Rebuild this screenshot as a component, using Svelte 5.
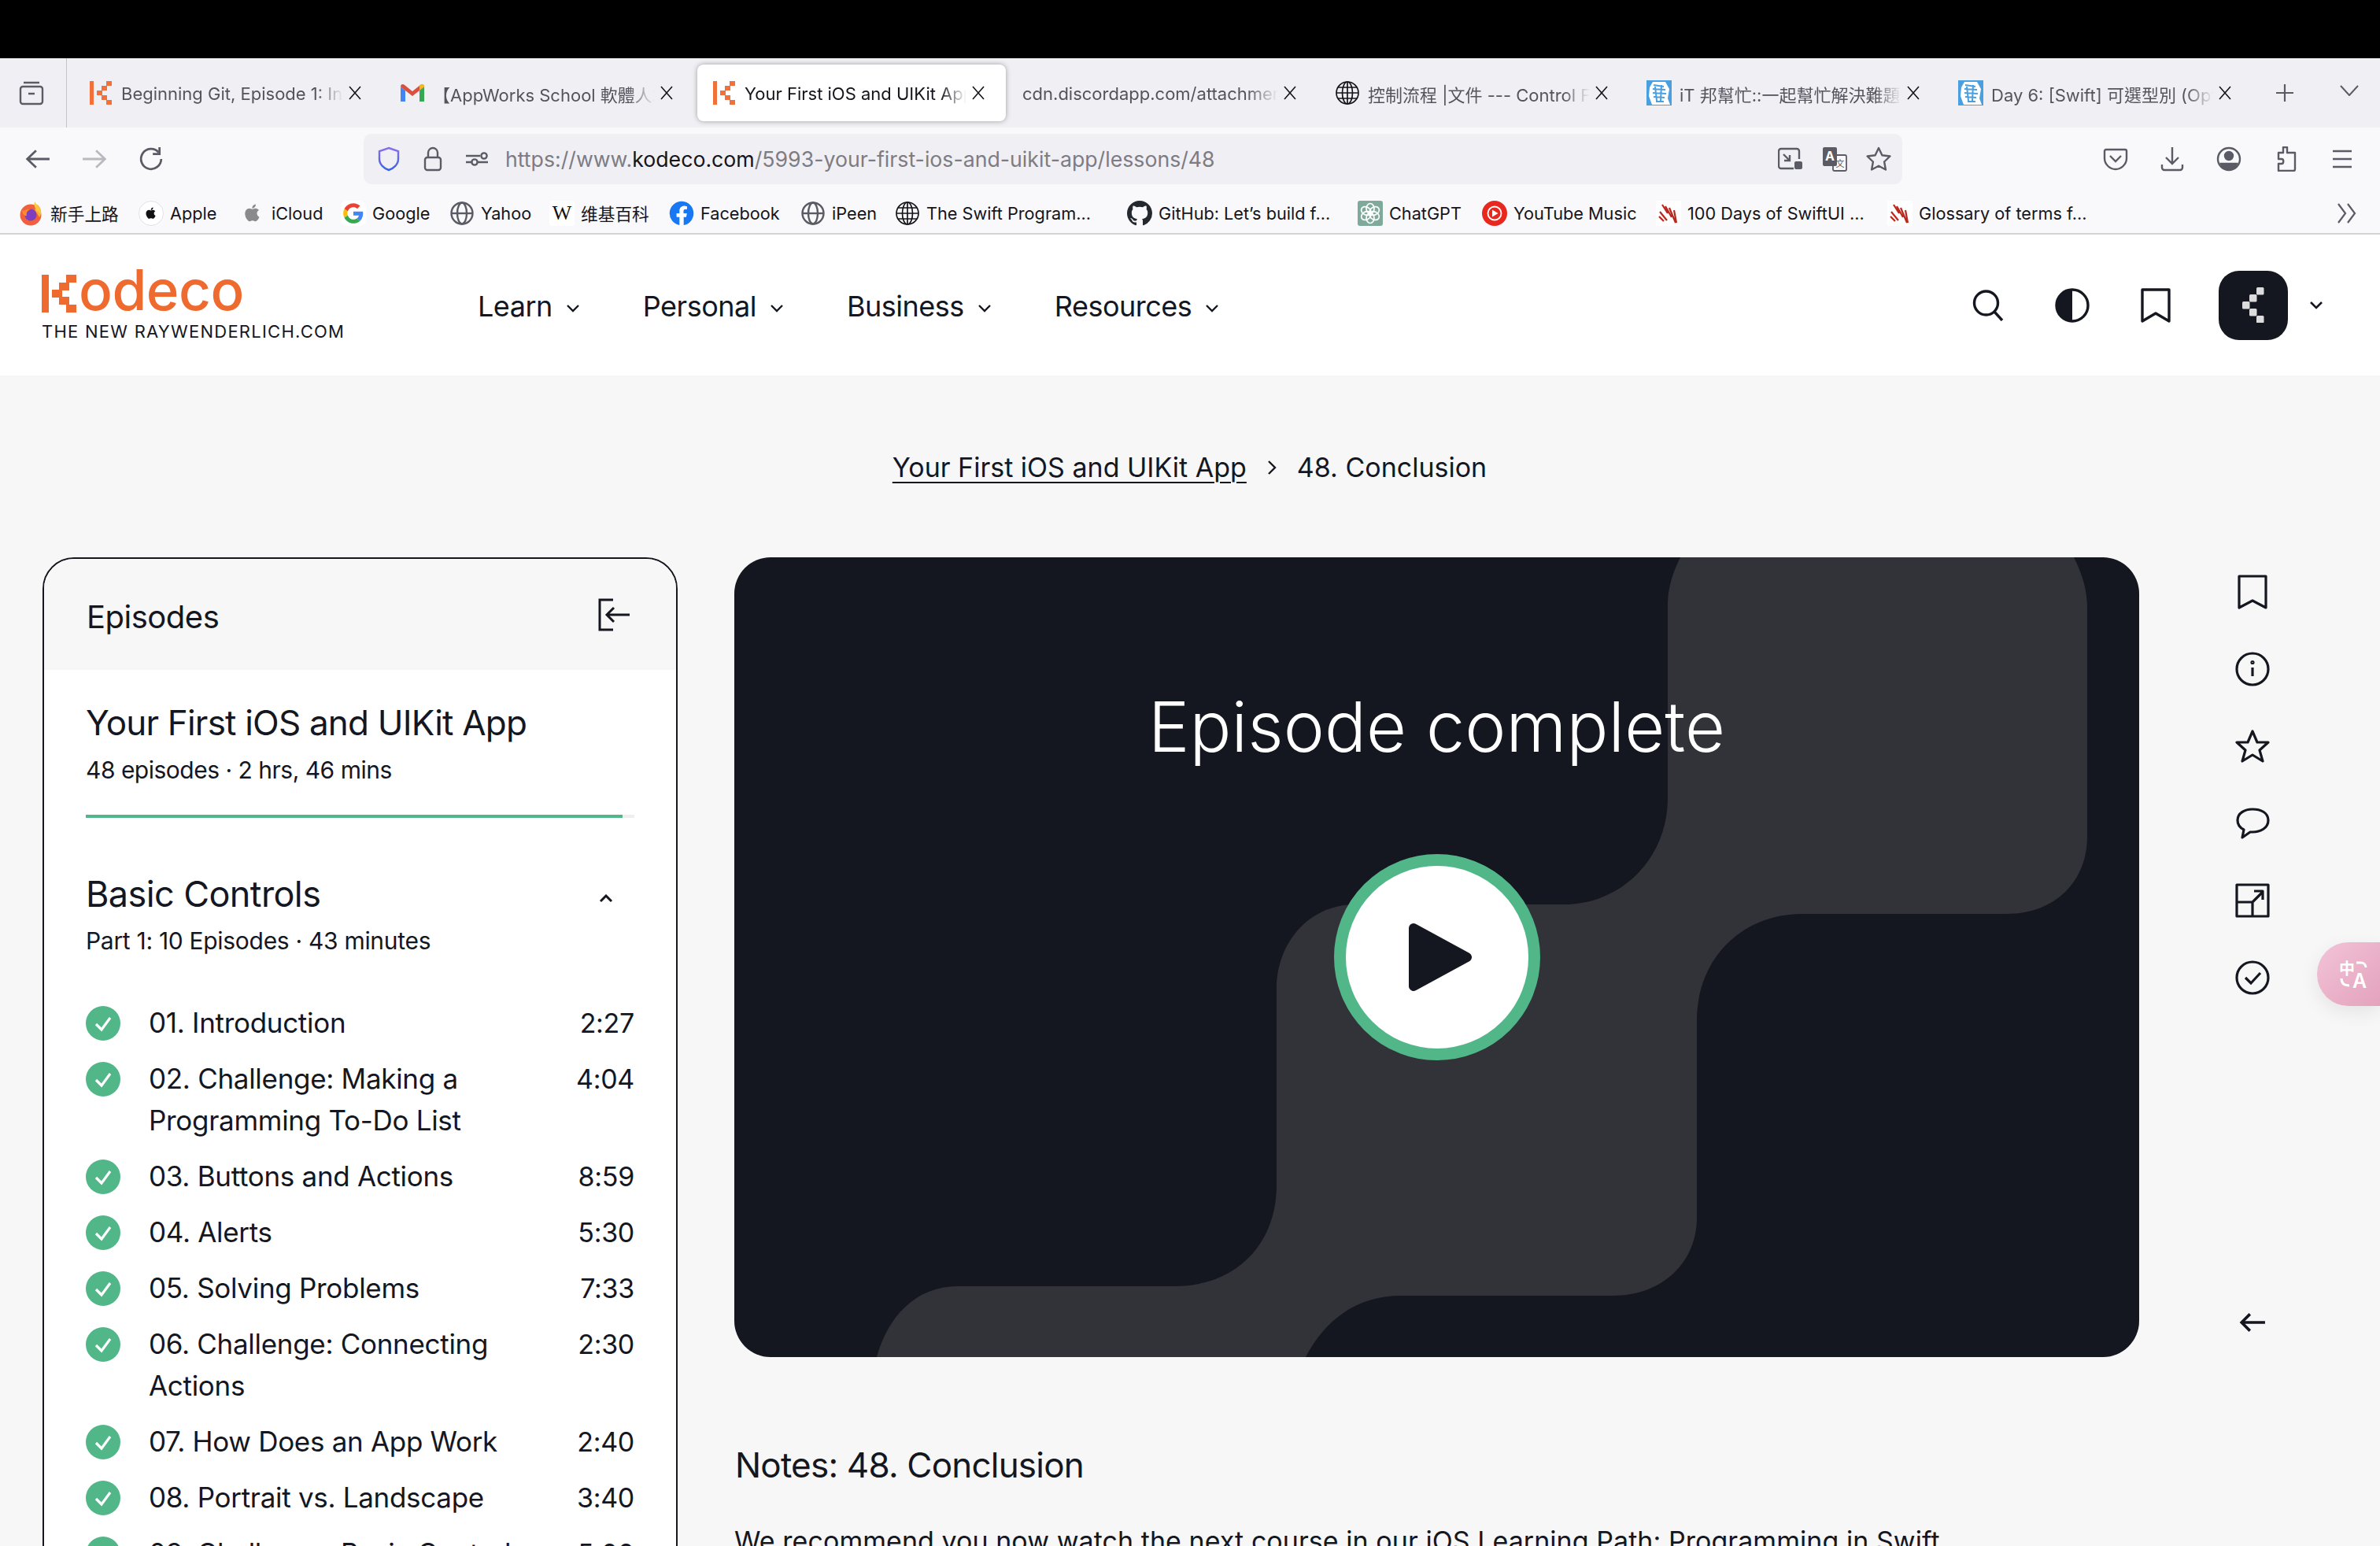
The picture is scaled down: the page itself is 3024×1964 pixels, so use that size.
<script>
	const tabs = [
		{ title: 'Beginning Git, Episode 1: Introduction', icon: 'k' },
		{ title: '【AppWorks School 軟體人才培訓', icon: 'gmail' },
		{ title: 'Your First iOS and UIKit App', icon: 'k', active: true },
		{ title: 'cdn.discordapp.com/attachments/10', icon: null },
		{ title: '控制流程 |文件 --- Control Flow', icon: 'globe2' },
		{ title: 'iT 邦幫忙::一起幫忙解決難題', icon: 'ithelp' },
		{ title: 'Day 6: [Swift] 可選型別 (Optional)', icon: 'ithelp' }
	];

	const bookmarks = [
		{ label: '新手上路', icon: 'firefox', w: 152 },
		{ label: 'Apple', icon: 'apple', w: 129 },
		{ label: 'iCloud', icon: 'icloud', w: 128 },
		{ label: 'Google', icon: 'google', w: 138 },
		{ label: 'Yahoo', icon: 'globe', w: 127 },
		{ label: '维基百科', icon: 'wiki', w: 152 },
		{ label: 'Facebook', icon: 'facebook', w: 167 },
		{ label: 'iPeen', icon: 'globe', w: 120 },
		{ label: 'The Swift Program...', icon: 'globe2', w: 295 },
		{ label: 'GitHub: Let\u2019s build f...', icon: 'github', w: 293 },
		{ label: 'ChatGPT', icon: 'chatgpt', w: 158 },
		{ label: 'YouTube Music', icon: 'ytmusic', w: 221 },
		{ label: '100 Days of SwiftUI ...', icon: 'hws', w: 294 },
		{ label: 'Glossary of terms f...', icon: 'hws', w: 300 }
	];

	const siteNav = ['Learn', 'Personal', 'Business', 'Resources'];

	const episodes = [
		{ name: '01. Introduction', time: '2:27' },
		{ name: '02. Challenge: Making a Programming To-Do List', time: '4:04' },
		{ name: '03. Buttons and Actions', time: '8:59' },
		{ name: '04. Alerts', time: '5:30' },
		{ name: '05. Solving Problems', time: '7:33' },
		{ name: '06. Challenge: Connecting Actions', time: '2:30' },
		{ name: '07. How Does an App Work', time: '2:40' },
		{ name: '08. Portrait vs. Landscape', time: '3:40' },
		{ name: '09. Challenge: Basic Controls', time: '5:00' }
	];

	// the five blocks of the Kodeco chevron
	const steps = [
		[2, 0],
		[1, 1],
		[0, 2],
		[1, 3],
		[2, 4]
	];
</script>

{#snippet favicon(name)}
	{#if name === 'k'}
		<svg class="fav" viewBox="0 0 32 32">
			<rect x="2" y="1" width="5" height="30" fill="#f2703a" />
			{#each steps as [c, r]}
				<rect x={11 + c * 6} y={1 + r * 6} width="7" height="6" fill="#f2703a" />
			{/each}
		</svg>
	{:else if name === 'gmail'}
		<svg class="fav" viewBox="0 0 32 32">
			<path d="M1 8v19h6V13z" fill="#4285f4" />
			<path d="M31 8v19h-6V13z" fill="#34a853" />
			<path d="M1 8c0-3 3-4 5-2l10 8 10-8c2-2 5-1 5 2l-6 5-9 7-9-7z" fill="#d9503f" />
			<path d="M25 6l1 0c2-2 5-1 5 2l-6 5z" fill="#f5bb12" />
		</svg>
	{:else if name === 'globe'}
		<svg class="fav" viewBox="0 0 32 32" fill="none" stroke="#5b5b66" stroke-width="2.4">
			<circle cx="16" cy="16" r="13.5" />
			<ellipse cx="16" cy="16" rx="6" ry="13.5" />
			<path d="M2.5 16h27" />
		</svg>
	{:else if name === 'globe2'}
		<svg class="fav" viewBox="0 0 32 32" fill="none" stroke="#15141a" stroke-width="1.7">
			<circle cx="16" cy="16" r="14" />
			<ellipse cx="16" cy="16" rx="6.5" ry="14" />
			<path d="M16 2v28M2 16h28M4 9h24M4 23h24" />
		</svg>
	{:else if name === 'ithelp'}
		<svg class="fav" viewBox="0 0 32 32">
			<rect width="32" height="32" fill="#4a9fe0" />
			<path d="M8 2h16l5 9-2 12 3 8H7L3 20l1-11z" fill="#fff" />
			<path d="M9 6l13 2M8 11l16 1M11 8l2 18M19 6l-1 20M8 16l17 1M9 21l14 1M12 27h10" stroke="#4a9fe0" stroke-width="2" fill="none" />
		</svg>
	{:else if name === 'firefox'}
		<svg class="fav" viewBox="0 0 32 32">
			<circle cx="15" cy="18" r="13.5" fill="#f0603c" />
			<path d="M28 17c1-6-2-11-6-13 2 3 1 6-2 7l6 10z" fill="#ffb32c" />
			<path d="M20 1c2 4 7 8 8 15-5-2-10-8-8-15z" fill="#ffc83d" />
			<circle cx="15" cy="18" r="7.5" fill="#7d3fc0" />
			<path d="M4 12c3 2 6-2 11-1-4 1-6 4-5 8-3 1-6-3-6-7z" fill="#ff8a2b" />
		</svg>
	{:else if name === 'apple'}
		<svg class="fav" viewBox="0 0 32 32">
			<circle cx="16" cy="16" r="15.5" fill="#fff" stroke="#e2e2e6" />
			<path transform="translate(6 6) scale(.8)" fill="#111" d="M17.05 20.28c-.98.95-2.05.8-3.08.35-1.09-.46-2.09-.48-3.24 0-1.44.62-2.2.44-3.06-.35C2.79 15.25 3.51 7.59 9.05 7.31c1.35.07 2.29.74 3.08.8 1.18-.24 2.31-.93 3.57-.84 1.51.12 2.65.72 3.4 1.8-3.12 1.87-2.38 5.98.48 7.13-.57 1.5-1.31 2.99-2.54 4.09zM12.03 7.25c-.15-2.23 1.66-4.07 3.74-4.25.29 2.58-2.34 4.5-3.74 4.25z" />
		</svg>
	{:else if name === 'icloud'}
		<svg class="fav" viewBox="0 0 32 32">
			<path transform="translate(1 1) scale(1.2)" fill="#8a8a8a" d="M17.05 20.28c-.98.95-2.05.8-3.08.35-1.09-.46-2.09-.48-3.24 0-1.44.62-2.2.44-3.06-.35C2.79 15.25 3.51 7.59 9.05 7.31c1.35.07 2.29.74 3.08.8 1.18-.24 2.31-.93 3.57-.84 1.51.12 2.65.72 3.4 1.8-3.12 1.87-2.38 5.98.48 7.13-.57 1.5-1.31 2.99-2.54 4.09zM12.03 7.25c-.15-2.23 1.66-4.07 3.74-4.25.29 2.58-2.34 4.5-3.74 4.25z" />
		</svg>
	{:else if name === 'google'}
		<svg class="fav" viewBox="-6 -6 60 60">
			<rect x="-6" y="-6" width="60" height="60" rx="14" fill="#fff" />
			<path fill="#EA4335" d="M24 9.5c3.54 0 6.71 1.22 9.21 3.6l6.85-6.85C35.9 2.38 30.47 0 24 0 14.62 0 6.51 5.38 2.56 13.22l7.98 6.19C12.43 13.72 17.74 9.5 24 9.5z" />
			<path fill="#4285F4" d="M46.98 24.55c0-1.57-.15-3.09-.38-4.55H24v9.02h12.94c-.58 2.96-2.26 5.48-4.78 7.18l7.73 6c4.51-4.18 7.09-10.36 7.09-17.65z" />
			<path fill="#FBBC05" d="M10.53 28.59c-.48-1.45-.76-2.99-.76-4.59s.27-3.14.76-4.59l-7.98-6.19C.92 16.46 0 20.12 0 24c0 3.88.92 7.54 2.56 10.78l7.97-6.19z" />
			<path fill="#34A853" d="M24 48c6.48 0 11.93-2.13 15.89-5.81l-7.73-6c-2.15 1.45-4.92 2.3-8.16 2.3-6.26 0-11.57-4.22-13.47-9.91l-7.98 6.19C6.51 42.62 14.62 48 24 48z" />
		</svg>
	{:else if name === 'wiki'}
		<span class="fav wiki">W</span>
	{:else if name === 'facebook'}
		<svg class="fav" viewBox="1.5 1.5 21 21">
			<path fill="#1877f2" d="M22 12a10 10 0 1 0-11.6 9.9v-7H7.9V12h2.5V9.8c0-2.5 1.5-3.9 3.8-3.9 1.1 0 2.2.2 2.2.2v2.5h-1.3c-1.2 0-1.6.8-1.6 1.6V12h2.8l-.4 2.9h-2.3v7A10 10 0 0 0 22 12z" />
			<path fill="#fff" d="M10.4 21.9v-7H7.9V12h2.5V9.8c0-2.5 1.5-3.9 3.8-3.9 1.1 0 2.2.2 2.2.2v2.5h-1.3c-1.2 0-1.6.8-1.6 1.6V12h2.8l-.4 2.9h-2.3v7a10 10 0 0 1-3.2 0z" />
		</svg>
	{:else if name === 'github'}
		<svg class="fav" viewBox="0 0 16 16">
			<path fill="#24292f" d="M8 0C3.58 0 0 3.58 0 8c0 3.54 2.29 6.53 5.47 7.59.4.07.55-.17.55-.38 0-.19-.01-.82-.01-1.49-2.01.37-2.53-.49-2.69-.94-.09-.23-.48-.94-.82-1.13-.28-.15-.68-.52-.01-.53.63-.01 1.08.58 1.23.82.72 1.21 1.87.87 2.33.66.07-.52.28-.87.51-1.07-1.78-.2-3.64-.89-3.64-3.95 0-.87.31-1.59.82-2.15-.08-.2-.36-1.02.08-2.12 0 0 .67-.21 2.2.82.64-.18 1.32-.27 2-.27s1.36.09 2 .27c1.53-1.04 2.2-.82 2.2-.82.44 1.1.16 1.92.08 2.12.51.56.82 1.27.82 2.15 0 3.07-1.87 3.75-3.65 3.95.29.25.54.73.54 1.48 0 1.07-.01 1.93-.01 2.2 0 .21.15.46.55.38A8.01 8.01 0 0 0 16 8c0-4.42-3.58-8-8-8z" />
		</svg>
	{:else if name === 'chatgpt'}
		<svg class="fav" viewBox="0 0 32 32">
			<rect width="32" height="32" rx="3" fill="#7fa99b" />
			<g fill="none" stroke="#fff" stroke-width="1.7">
				<ellipse cx="16" cy="10" rx="5" ry="6.5" />
				<ellipse cx="16" cy="10" rx="5" ry="6.5" transform="rotate(60 16 16)" />
				<ellipse cx="16" cy="10" rx="5" ry="6.5" transform="rotate(120 16 16)" />
				<ellipse cx="16" cy="10" rx="5" ry="6.5" transform="rotate(180 16 16)" />
				<ellipse cx="16" cy="10" rx="5" ry="6.5" transform="rotate(240 16 16)" />
				<ellipse cx="16" cy="10" rx="5" ry="6.5" transform="rotate(300 16 16)" />
			</g>
		</svg>
	{:else if name === 'ytmusic'}
		<svg class="fav" viewBox="0 0 32 32">
			<circle cx="16" cy="16" r="16" fill="#e8281f" />
			<circle cx="16" cy="16" r="8.5" fill="none" stroke="#fff" stroke-width="1.8" />
			<path d="M13 11.5l7.5 4.5-7.5 4.5z" fill="#fff" />
		</svg>
	{:else if name === 'hws'}
		<svg class="fav" viewBox="0 0 32 32">
			<rect width="32" height="32" fill="#fff" />
			<path d="M8 5l7 11M12 7l8 14M17 9l8 19M5 14l9 11M4 20l6 6M23 12l3 16" stroke="#b8281e" stroke-width="2.2" fill="none" />
		</svg>
	{/if}
{/snippet}

{#snippet markBlocks(size, gap, fill)}
	{#each steps as [c, r]}
		<rect x={c * gap} y={r * gap} width={size} height={size} rx="1.5" {fill} />
	{/each}
{/snippet}

<div class="window">
	<div class="notch"></div>

	<div class="tabstrip">
		<div class="tabs-view">
			<svg class="tb" viewBox="0 0 32 32" fill="none" stroke="#5b5b66" stroke-width="2.4" stroke-linejoin="round">
				<rect x="2" y="8" width="28" height="22" rx="3" />
				<path d="M6 3h20M12 17h8" />
			</svg>
		</div>
		<div class="tab-list">
			{#each tabs as tab}
				<div class="tab" class:active={tab.active} class:bare={!tab.icon}>
					{#if tab.icon}{@render favicon(tab.icon)}{/if}
					<span class="tab-title">{tab.title}</span>
					<svg class="tab-close" viewBox="0 0 16 18" fill="none" stroke="#15141a" stroke-width="1.6">
						<path d="M1 1l14 16M15 1L1 17" />
					</svg>
				</div>
			{/each}
		</div>
		<svg class="new-tab" viewBox="0 0 24 24" fill="none" stroke="#5b5b66" stroke-width="2.2"><path d="M12 1v22M1 12h22" /></svg>
		<svg class="all-tabs" viewBox="0 0 24 14" fill="none" stroke="#5b5b66" stroke-width="2"><path d="M1 1l11 12L23 1" /></svg>
	</div>

	<div class="toolbar">
		<div class="nav-buttons">
			<svg class="tb" viewBox="0 0 30 24" fill="none" stroke="#5b5b66" stroke-width="2.6"><path d="M29 12H3M13 2L2.5 12 13 22" /></svg>
			<svg class="tb" viewBox="0 0 30 24" fill="none" stroke="#b9b9bf" stroke-width="2.6"><path d="M1 12h26M17 2l10.5 10L17 22" /></svg>
			<svg class="tb" viewBox="0 0 30 30" fill="none" stroke="#5b5b66" stroke-width="2.6"><path d="M24 7a12 12 0 1 0 3 8" /><path d="M25 1v8h-8" /></svg>
		</div>
		<div class="urlbar">
			<svg class="shield" viewBox="0 0 28 32" fill="none" stroke="url(#shieldGrad)" stroke-width="2.4">
				<defs>
					<linearGradient id="shieldGrad" x1="0" y1="0" x2="0" y2="1">
						<stop offset="0" stop-color="#8a6cf0" />
						<stop offset="1" stop-color="#3c64e0" />
					</linearGradient>
				</defs>
				<path d="M14 2l12 4v10c0 7-6 12-12 14C8 28 2 23 2 16V6z" />
			</svg>
			<svg class="lock" viewBox="0 0 24 32" fill="none" stroke="#5b5b66" stroke-width="2.4">
				<rect x="2" y="14" width="20" height="16" rx="3" />
				<path d="M6 14V8a6 6 0 0 1 12 0v6" />
			</svg>
			<svg class="sliders" viewBox="0 0 30 18" fill="none" stroke="#5b5b66" stroke-width="2.4">
				<path d="M1 5h18M1 13h7M16 13h13" />
				<circle cx="24" cy="5" r="3.6" />
				<circle cx="12" cy="13" r="3.6" />
			</svg>
			<span class="url">https://www.<b>kodeco.com</b>/5993-your-first-ios-and-uikit-app/lessons/48</span>
			<div class="url-actions">
				<svg class="tb" viewBox="0 0 32 28" fill="none" stroke="#5b5b66" stroke-width="2.4">
					<path d="M20 26H4a3 3 0 0 1-3-3V4a3 3 0 0 1 3-3h20a3 3 0 0 1 3 3v10" />
					<path d="M7 8l8 8M15 9v7H8" />
					<rect x="21" y="17" width="10" height="10" rx="2" fill="#5b5b66" stroke="none" />
				</svg>
				<svg class="tb" viewBox="0 0 32 32">
					<rect x="14" y="11" width="17" height="20" rx="2" fill="#f9f9fb" stroke="#5b5b66" stroke-width="1.8" />
					<rect x="1" y="1" width="18" height="24" rx="2" fill="#5b5b66" />
					<text x="10" y="18" class="tr-a">A</text>
					<text x="23" y="26" class="tr-z">文</text>
				</svg>
				<svg class="tb" viewBox="0 0 32 32" fill="none" stroke="#5b5b66" stroke-width="2.4" stroke-linejoin="round">
					<path d="M16 2l4.4 9.2 10 1.3-7.3 7 1.8 10L16 24.700l-8.900 4.800 1.800-10-7.300-7 10-1.300z" />
				</svg>
			</div>
		</div>
		<div class="browser-actions">
			<svg class="tb" viewBox="0 0 32 32" fill="none" stroke="#5b5b66" stroke-width="2.4">
				<path d="M4 4h24a2 2 0 0 1 2 2v9c0 8-7 14-14 14S2 23 2 15V6a2 2 0 0 1 2-2z" />
				<path d="M9 12l7 7 7-7" />
			</svg>
			<svg class="tb" viewBox="0 0 32 32" fill="none" stroke="#5b5b66" stroke-width="2.4">
				<path d="M16 1v21M8 14l8 8 8-8M3 23v4a3 3 0 0 0 3 3h20a3 3 0 0 0 3-3v-4" />
			</svg>
			<svg class="tb" viewBox="0 0 32 32" fill="none" stroke="#5b5b66" stroke-width="2.4">
				<circle cx="16" cy="16" r="14" />
				<circle cx="16" cy="12" r="5" fill="#5b5b66" />
				<path d="M6 22h20c-2 5-6 7-10 7s-8-2-10-7z" fill="#5b5b66" />
			</svg>
			<svg class="tb" viewBox="0 0 32 32" fill="none" stroke="#5b5b66" stroke-width="2.400" stroke-linejoin="round">
				<path d="M13 1h5v7h10v21a2 2 0 0 1-2 2H7v-9h4c3 0 3-6 0-6H7V8h6z" />
			</svg>
			<svg class="tb" viewBox="0 0 32 32" fill="none" stroke="#5b5b66" stroke-width="2.6">
				<path d="M4 6h24M4 16h24M4 26h24" />
			</svg>
		</div>
	</div>

	<div class="bookmarks">
		{#each bookmarks as mark}
			<div class="bookmark" style="width: {mark.w}px">
				{@render favicon(mark.icon)}
				<span>{mark.label}</span>
			</div>
		{/each}
		<svg class="more" viewBox="0 0 26 26" fill="none" stroke="#5b5b66" stroke-width="2.2"><path d="M2 1l9 12-9 12M14 1l9 12-9 12" /></svg>
	</div>

	<header class="site-header">
		<div class="logo">
			<div class="wordmark">
				<svg class="logo-k" viewBox="0 0 44 50">
					<rect x="0" y="1" width="9" height="48" fill="#ef6a2e" />
					<rect x="31" y="1" width="13" height="10" fill="#ef6a2e" />
					<rect x="22" y="11" width="13" height="10" fill="#ef6a2e" />
					<rect x="13" y="20" width="13" height="10" fill="#ef6a2e" />
					<rect x="22" y="29" width="13" height="10" fill="#ef6a2e" />
					<rect x="31" y="39" width="13" height="10" fill="#ef6a2e" />
				</svg>
				<span>odeco</span>
			</div>
			<div class="tagline">THE NEW RAYWENDERLICH.COM</div>
		</div>
		<nav class="site-nav">
			{#each siteNav as item}
				<div class="nav-item">
					{item}
					<svg class="nav-chev" viewBox="0 0 18 11" fill="none" stroke="#14171f" stroke-width="2.4"><path d="M2 2l7 7 7-7" /></svg>
				</div>
			{/each}
		</nav>
		<div class="site-actions">
			<svg class="search" viewBox="0 0 40 40" fill="none" stroke="#14171f" stroke-width="3.4">
				<circle cx="17.500" cy="17" r="15" />
				<path d="M28 28l10 11" />
			</svg>
			<svg class="theme" viewBox="0 0 44 44">
				<circle cx="22" cy="22" r="20" fill="#fff" stroke="#14171f" stroke-width="3.4" />
				<path d="M22 2a20 20 0 0 0 0 40z" fill="#14171f" />
			</svg>
			<svg class="saved" viewBox="0 0 38 44" fill="none" stroke="#14171f" stroke-width="3.4" stroke-linejoin="round">
				<path d="M2 2h34v40L19 32 2 42z" />
			</svg>
			<div class="avatar">
				<svg viewBox="0 0 28 45">{@render markBlocks(9.500, 9, '#dcdcdc')}</svg>
			</div>
			<svg class="avatar-chev" viewBox="0 0 18 11" fill="none" stroke="#14171f" stroke-width="2.600"><path d="M2 2l7 7 7-7" /></svg>
		</div>
	</header>

	<main class="page">
		<div class="crumbs">
			<span class="crumb-link">Your First iOS and UIKit App</span>
			<svg class="crumb-sep" viewBox="0 0 12 20" fill="none" stroke="#14171f" stroke-width="2.400"><path d="M2 2l8 8-8 8" /></svg>
			<span>48. Conclusion</span>
		</div>

		<div class="content">
			<aside class="sidebar">
				<div class="side-head">
					<span>Episodes</span>
					<svg class="collapse" viewBox="0 0 42 42" fill="none" stroke="#14171f" stroke-width="3">
						<path d="M20 2H3v38h17M41 21H13M21 12l-9 9 9 9" />
					</svg>
				</div>
				<div class="side-body">
					<h2>Your First iOS and UIKit App</h2>
					<p class="meta">48 episodes · 2 hrs, 46 mins</p>
					<div class="progress"><div class="progress-fill"></div></div>
					<div class="section-head">
						<h3>Basic Controls</h3>
						<svg class="section-chev" viewBox="0 0 18 11" fill="none" stroke="#14171f" stroke-width="3"><path d="M2 9l7-7 7 7" /></svg>
					</div>
					<p class="meta part">Part 1: 10 Episodes · 43 minutes</p>
					<ul class="episodes">
						{#each episodes as ep}
							<li>
								<svg class="done" viewBox="0 0 44 44">
									<circle cx="22" cy="22" r="22" fill="#52b788" />
									<path d="M13 23l7 7 11-15" fill="none" stroke="#fff" stroke-width="3.200" />
								</svg>
								<span class="ep-name">{ep.name}</span>
								<span class="ep-time">{ep.time}</span>
							</li>
						{/each}
					</ul>
				</div>
			</aside>

			<section class="main-col">
				<div class="video">
					<svg class="video-bg" viewBox="0 0 1785 1016">
						<path fill="#323338" d="M1202 0C1192 20 1186 40 1186 60V306C1186 380 1130 441 1053 441H789C730 441 689 490 689 548V798C689 870 640 926 559 926H284C230 926 195 965 181 1016H726C750 970 790 938 847 938H1116C1180 938 1223 895 1223 839V589C1223 510 1280 453 1357 453H1616C1680 453 1719 410 1719 355V65C1719 40 1712 20 1702 0Z" />
					</svg>
					<h1>Episode complete</h1>
					<div class="play">
						<svg viewBox="0 0 82 88"><path d="M7 7L75 44 7 81z" fill="#14171f" stroke="#14171f" stroke-width="12" stroke-linejoin="round" /></svg>
					</div>
				</div>
				<h4>Notes: 48. Conclusion</h4>
				<p class="notes">We recommend you now watch the next course in our iOS Learning Path: Programming in Swift</p>
			</section>

			<div class="rail">
				<div class="rail-icons">
					<svg viewBox="0 0 44 44" fill="none" stroke="#14171f" stroke-width="3.200" stroke-linejoin="round"><path d="M5 2h34v40L22 33 5 42z" /></svg>
					<svg viewBox="0 0 44 44" fill="none" stroke="#14171f" stroke-width="3.200"><circle cx="22" cy="22" r="20" /><path d="M22 20v11" /><circle cx="22" cy="13.500" r="1" /></svg>
					<svg viewBox="0 0 44 44" fill="none" stroke="#14171f" stroke-width="3.200" stroke-linejoin="round"><path d="M22 3l6 14h14L31 27l4 14-13-8-13 8 4-14L2 17h14z" /></svg>
					<svg viewBox="0 0 44 44" fill="none" stroke="#14171f" stroke-width="3.200" stroke-linejoin="round"><path d="M22 4C12 4 3 9 3 18c0 6 4 10 8 12l-2 10 10-7h3c10 0 20-5 20-15S32 4 22 4z" /></svg>
					<svg viewBox="0 0 44 44" fill="none" stroke="#14171f" stroke-width="3.200" stroke-linejoin="round"><rect x="2" y="2" width="40" height="40" /><path d="M2 24h20v18M22 24l13-13M24 10h11v11" /></svg>
					<svg viewBox="0 0 44 44" fill="none" stroke="#14171f" stroke-width="3.200"><circle cx="22" cy="22" r="20" /><path d="M13 22l7 7 12-13" /></svg>
				</div>
				<svg class="rail-back" viewBox="0 0 32 24" fill="none" stroke="#14171f" stroke-width="3.400"><path d="M31 12H4M13 2L3 12l10 10" /></svg>
			</div>
		</div>
	</main>

	<div class="translate-fab">
		<svg viewBox="0 0 38 36">
			<text x="0" y="18" class="fab-zh">中</text>
			<text x="17" y="35" class="fab-en">A</text>
			<path d="M22 3h6a6 6 0 0 1 6 6M3 23c0 6 3 9 10 9" fill="none" stroke="#fff" stroke-width="3" />
		</svg>
	</div>
</div>

<style>
	:global(body) {
		margin: 0;
		background: #f7f7f7;
	}

	.window {
		position: relative;
		width: 3024px;
		height: 1964px;
		overflow: hidden;
		font-family: Inter, 'Noto Sans CJK TC', sans-serif;
		color: #14171f;
	}

	svg {
		display: block;
		flex: none;
	}

	.notch {
		height: 74px;
		background: #000;
	}

	/* browser chrome */
	.tabstrip {
		display: flex;
		height: 88px;
		background: #f0f0f4;
	}

	.tabs-view {
		display: flex;
		align-items: center;
		justify-content: center;
		width: 80px;
		height: 88px;
		padding-right: 4px;
		border-right: 1px solid #c4c4c8;
		box-sizing: content-box;
	}

	.tb {
		width: 32px;
		height: 32px;
	}

	.tab-list {
		display: flex;
		gap: 4px;
		margin-left: 9px;
	}

	.tab {
		position: relative;
		display: flex;
		align-items: center;
		width: 392px;
		height: 72px;
		margin-top: 8px;
		padding-left: 18px;
		box-sizing: border-box;
		border-radius: 8px;
		font-size: 22px;
		color: #55545c;
	}

	.tab.active {
		background: #fff;
		color: #15141a;
		box-shadow: 0 0 6px rgba(0, 0, 0, 0.35);
	}

	.tab.bare {
		padding-left: 17px;
	}

	.fav {
		display: block;
		flex: none;
		width: 32px;
		height: 32px;
	}

	.wiki {
		display: flex;
		align-items: center;
		justify-content: center;
		background: #fff;
		border-radius: 4px;
		font-family: 'Liberation Serif', serif;
		font-size: 26px;
		color: #111;
	}

	.tab-title {
		width: 282px;
		margin: 2px 0 0 10px;
		overflow: hidden;
		white-space: nowrap;
		-webkit-mask-image: linear-gradient(to right, #000 88%, transparent 100%);
		mask-image: linear-gradient(to right, #000 88%, transparent 100%);
	}

	.tab.bare .tab-title {
		width: 325px;
		margin-left: 0;
	}

	.tab-close {
		position: absolute;
		left: 349px;
		top: 27px;
		width: 16px;
		height: 18px;
	}

	.new-tab {
		width: 24px;
		height: 24px;
		margin: 32px 0 0 29px;
	}

	.all-tabs {
		width: 24px;
		height: 14px;
		margin: 34px 0 0 58px;
	}

	.toolbar {
		display: flex;
		align-items: center;
		height: 80px;
		background: #f9f9fb;
	}

	.nav-buttons {
		display: flex;
		gap: 40px;
		margin-left: 32px;
		width: 430px;
	}

	.urlbar {
		display: flex;
		align-items: center;
		width: 1955px;
		height: 64px;
		padding: 0 14px 0 18px;
		box-sizing: border-box;
		border-radius: 10px;
		background: #f0f0f4;
		font-size: 26.7px;
		color: #7d7c84;
	}

	.shield {
		width: 28px;
		height: 32px;
	}

	.lock {
		width: 24px;
		height: 32px;
		margin-left: 30px;
	}

	.sliders {
		width: 30px;
		height: 18px;
		margin-left: 29px;
	}

	.url {
		margin-left: 21px;
		white-space: nowrap;
	}

	.url b {
		font-weight: 400;
		color: #15141a;
	}

	.url-actions {
		display: flex;
		gap: 24px;
		margin-left: auto;
	}

	.browser-actions {
		display: flex;
		gap: 40px;
		margin-left: 255px;
	}

	.bookmarks {
		display: flex;
		align-items: center;
		height: 56px;
		padding: 3px 0 0 24px;
		background: #f9f9fb;
		border-bottom: 2px solid #d4d4d6;
		box-sizing: border-box;
		font-size: 21.7px;
		color: #15141a;
	}

	.bookmark {
		display: flex;
		align-items: center;
		gap: 8px;
		flex: none;
		white-space: nowrap;
	}

	.more {
		width: 26px;
		height: 26px;
		margin-left: 271px;
	}

	/* site header */
	.site-header {
		display: flex;
		align-items: center;
		height: 179px;
		padding-left: 53px;
		background: #fff;
	}

	.logo {
		width: 554px;
		margin-top: 2px;
	}

	.wordmark {
		display: flex;
		align-items: flex-end;
		height: 54px;
		color: #ef6a2e;
		font-size: 71px;
		font-weight: 500;
		line-height: 54px;
		letter-spacing: -0.5px;
	}

	.logo-k {
		width: 44px;
		height: 50px;
		margin-right: 3px;
	}

	.wordmark span {
		height: 54px;
		margin-bottom: 0;
		line-height: 48px;
	}

	.tagline {
		margin-top: 11px;
		font-size: 22px;
		line-height: 24px;
		letter-spacing: 1.25px;
		white-space: nowrap;
	}

	.site-nav {
		display: flex;
		gap: 80px;
		margin-top: 3px;
	}

	.nav-item {
		display: flex;
		align-items: center;
		gap: 17px;
		font-size: 36px;
		letter-spacing: -0.5px;
	}

	.nav-chev {
		width: 18px;
		height: 11px;
		margin-top: 4px;
	}

	.site-actions {
		display: flex;
		align-items: center;
		margin-left: auto;
		margin-right: 72px;
	}

	.search {
		width: 40px;
		height: 40px;
	}

	.theme {
		width: 44px;
		height: 44px;
		margin-left: 65px;
	}

	.saved {
		width: 38px;
		height: 44px;
		margin-left: 65px;
	}

	.avatar {
		display: flex;
		align-items: center;
		justify-content: center;
		width: 88px;
		height: 88px;
		margin-left: 61px;
		border-radius: 26px;
		background: #14171f;
	}

	.avatar svg {
		width: 28px;
		height: 45px;
	}

	.avatar-chev {
		width: 18px;
		height: 11px;
		margin-left: 27px;
	}

	/* page */
	.crumbs {
		display: flex;
		align-items: center;
		justify-content: center;
		gap: 26px;
		height: 231px;
		margin-left: -1px;
		padding-top: 2px;
		box-sizing: border-box;
		font-size: 34px;
	}

	.crumb-link {
		text-decoration: underline;
		text-underline-offset: 6px;
		text-decoration-thickness: 2px;
	}

	.crumb-sep {
		width: 12px;
		height: 20px;
	}

	.content {
		display: flex;
		padding-left: 54px;
	}

	.sidebar {
		width: 807px;
		flex: none;
		box-sizing: border-box;
		border: 2px solid #14171f;
		border-radius: 40px;
		overflow: hidden;
		background: #fff;
	}

	.side-head {
		display: flex;
		align-items: center;
		justify-content: space-between;
		height: 141px;
		padding: 6px 58px 0 54px;
		box-sizing: border-box;
		background: #f7f7f7;
		font-size: 40px;
		letter-spacing: -0.5px;
	}

	.collapse {
		width: 42px;
		height: 42px;
		margin-top: -6px;
	}

	.side-body {
		padding: 40px 53px 0;
	}

	h2,
	h3,
	h4 {
		margin: 0;
		font-weight: 400;
		font-size: 44px;
		line-height: 54px;
		letter-spacing: -0.8px;
	}

	h3 {
		font-size: 45px;
		letter-spacing: -0.6px;
	}

	.meta {
		margin: 11px 0 0;
		font-size: 30px;
		line-height: 44px;
		letter-spacing: -0.5px;
	}

	.progress {
		height: 4px;
		margin-top: 35px;
		background: #eeeeee;
	}

	.progress-fill {
		width: 682px;
		height: 100%;
		background: #52b788;
	}

	.section-head {
		display: flex;
		align-items: center;
		justify-content: space-between;
		margin-top: 70px;
	}

	.section-chev {
		width: 18px;
		height: 11px;
		margin: 10px 27px 0 0;
	}

	.meta.part {
		margin-top: 10px;
		letter-spacing: -0.3px;
	}

	.episodes {
		display: flex;
		flex-direction: column;
		gap: 18px;
		margin: 56px 0 0;
		padding: 0;
		list-style: none;
		font-size: 35px;
		line-height: 53px;
		letter-spacing: -0.3px;
	}

	.episodes li {
		display: flex;
		align-items: flex-start;
	}

	.done {
		width: 44px;
		height: 44px;
		margin-top: 5px;
	}

	.ep-name {
		width: 500px;
		margin-left: 36px;
	}

	.ep-time {
		margin-left: auto;
		font-size: 34px;
	}

	.main-col {
		width: 1785px;
		flex: none;
		margin-left: 72px;
	}

	.video {
		position: relative;
		display: flex;
		flex-direction: column;
		align-items: center;
		height: 1016px;
		border-radius: 46px;
		overflow: hidden;
		background: #14171f;
		color: #fff;
	}

	.video-bg {
		position: absolute;
		inset: 0;
		width: 100%;
		height: 100%;
	}

	.video h1 {
		position: relative;
		margin: 157px 0 0;
		font-size: 88px;
		font-weight: 350;
		line-height: 116px;
		letter-spacing: 0.1px;
	}

	.play {
		position: relative;
		display: flex;
		align-items: center;
		justify-content: center;
		width: 262px;
		height: 262px;
		margin-top: 104px;
		box-sizing: border-box;
		border: 15px solid #52b788;
		border-radius: 50%;
		background: #fff;
	}

	.play svg {
		width: 82px;
		height: 88px;
		margin-left: 8px;
	}

	.main-col h4 {
		margin-top: 110px;
		padding-left: 1px;
	}

	.notes {
		margin: 48px 0 0;
		font-size: 34px;
		line-height: 44px;
		letter-spacing: 0.05px;
		white-space: nowrap;
	}

	.rail {
		position: relative;
		display: flex;
		flex-direction: column;
		align-items: center;
		width: 44px;
		height: 1016px;
		margin-left: 122px;
	}

	.rail-icons {
		display: flex;
		flex-direction: column;
		gap: 54px;
		margin-top: 22px;
	}

	.rail-icons svg {
		width: 44px;
		height: 44px;
	}

	.rail-back {
		width: 34px;
		height: 26px;
		margin-top: auto;
		margin-bottom: 31px;
	}

	.translate-fab {
		position: absolute;
		left: 2944px;
		top: 1197px;
		display: flex;
		align-items: center;
		width: 80px;
		height: 81px;
		padding-left: 28px;
		box-sizing: border-box;
		border-radius: 40px 0 0 40px;
		background: linear-gradient(135deg, #f2c4d8, #e4a2bd);
		box-shadow: 0 8px 24px rgba(0, 0, 0, 0.08);
	}

	.translate-fab svg {
		width: 38px;
		height: 36px;
	}

	.fab-zh {
		fill: #fff;
		font-size: 20px;
		font-weight: 700;
	}

	.fab-en {
		fill: #fff;
		font-size: 25px;
		font-weight: 600;
	}

	.tr-a {
		fill: #fff;
		font-size: 16px;
		font-weight: 700;
		text-anchor: middle;
	}

	.tr-z {
		fill: #5b5b66;
		font-size: 11px;
		text-anchor: middle;
	}
</style>
